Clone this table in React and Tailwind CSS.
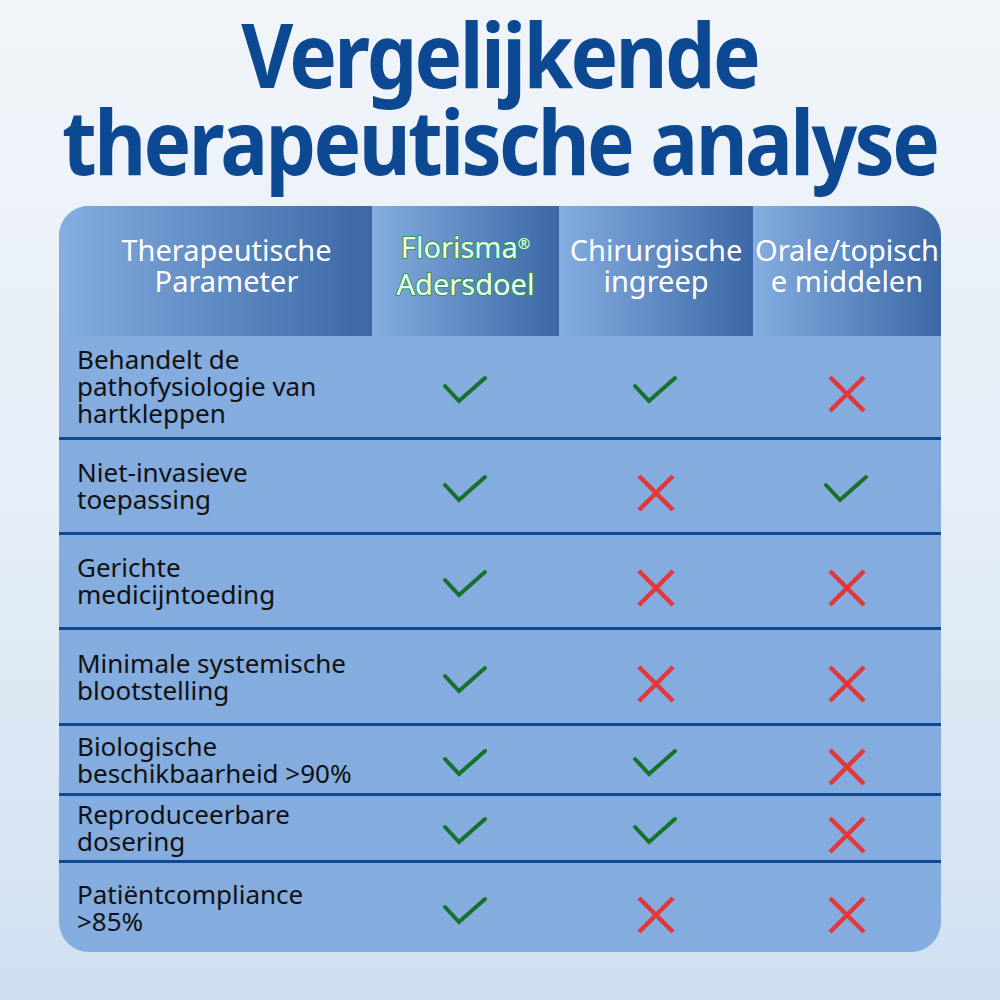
const columns = [
  { key: 'param', label: ['Therapeutische', 'Parameter'], pad: 'pl-[22px]' },
  { key: 'florisma', label: ['Florisma', 'Adersdoel'], brand: true },
  { key: 'surgery', label: ['Chirurgische', 'ingreep'] },
  { key: 'oral', label: ['Orale/topisch', 'e middelen'] }
]

// height per row in px, border included
const rows = [
  { label: ['Behandelt de', 'pathofysiologie van', 'hartkleppen'], h: 'h-[101px]', values: [true, true, false] },
  { label: ['Niet-invasieve', 'toepassing'], h: 'h-[95px]', values: [true, false, true] },
  { label: ['Gerichte', 'medicijntoeding'], h: 'h-[95px]', values: [true, false, false] },
  { label: ['Minimale systemische', 'blootstelling'], h: 'h-[96px]', values: [true, false, false] },
  { label: ['Biologische', 'beschikbaarheid >90%'], h: 'h-[70px]', values: [true, true, false] },
  { label: ['Reproduceerbare', 'dosering'], h: 'h-[67px]', values: [true, true, false] },
  { label: ['Patiëntcompliance', '>85%'], h: 'h-[92px]', values: [true, false, false] }
]

function Mark({ ok }) {
  if (ok) {
    return (
      <svg width="48" height="36" viewBox="0 0 48 36" className="mt-[12px]">
        <polyline
          points="3,11 17,26 43,3"
          fill="none"
          stroke="#16722b"
          strokeWidth="4"
          strokeLinecap="round"
          strokeLinejoin="miter"
        />
      </svg>
    )
  }
  return (
    <svg width="40" height="40" viewBox="0 0 40 40" className="mt-[14px]">
      <path d="M3 3 L37 37 M37 3 L3 37" stroke="#e1383c" strokeWidth="4.5" strokeLinecap="butt" />
    </svg>
  )
}

export default function App() {
  return (
    <div className="w-[1000px] h-[1000px] bg-gradient-to-b from-[#f1f5fa] via-[#e6eef7] to-[#d0e0f1] font-['Noto_Sans',sans-serif] flex flex-col items-center">
      <h1 className="mt-[10px] h-[196px] text-center text-[#0d4893] font-bold text-[90px] leading-[87px] tracking-[-3px] scale-x-[0.89] whitespace-nowrap">
        Vergelijkende
        <br />
        therapeutische analyse
      </h1>

      <div className="w-[882px] rounded-[30px] overflow-hidden bg-[#84acdf]">
        <div className="grid grid-cols-[313px_187px_194px_188px] h-[130px]">
          {columns.map((col) => (
            <div
              key={col.key}
              className={`flex flex-col items-center justify-center pb-[12px] ${col.pad || ''} bg-gradient-to-r from-[#85ade0] to-[#3b68a6] text-[29px] leading-[31px] text-white whitespace-nowrap`}
            >
              {col.label.map((line, k) => (
                <span
                  key={line}
                  className={
                    col.brand
                      ? 'text-[#f4fff5] [-webkit-text-stroke:2px_#2a9d4e] [paint-order:stroke_fill]'
                      : ''
                  }
                >
                  {line}
                  {col.brand && k === 0 && (
                    <span className="relative top-[-9px] text-[15px] [-webkit-text-stroke:1.5px_#2a9d4e]">®</span>
                  )}
                </span>
              ))}
            </div>
          ))}
        </div>

        {rows.map((row, i) => (
          <div
            key={row.label[0]}
            className={`grid grid-cols-[313px_187px_194px_188px] ${row.h} ${
              i > 0 ? 'border-t-[3px] border-[#0e4a92]' : ''
            }`}
          >
            <div className="flex flex-col justify-center pl-[18px] text-[26px] leading-[27px] text-[#111] whitespace-nowrap">
              {row.label.map((line) => (
                <span key={line}>{line}</span>
              ))}
            </div>
            {row.values.map((v, j) => (
              <div key={j} className="flex items-center justify-center">
                <Mark ok={v} />
              </div>
            ))}
          </div>
        ))}
      </div>
    </div>
  )
}
